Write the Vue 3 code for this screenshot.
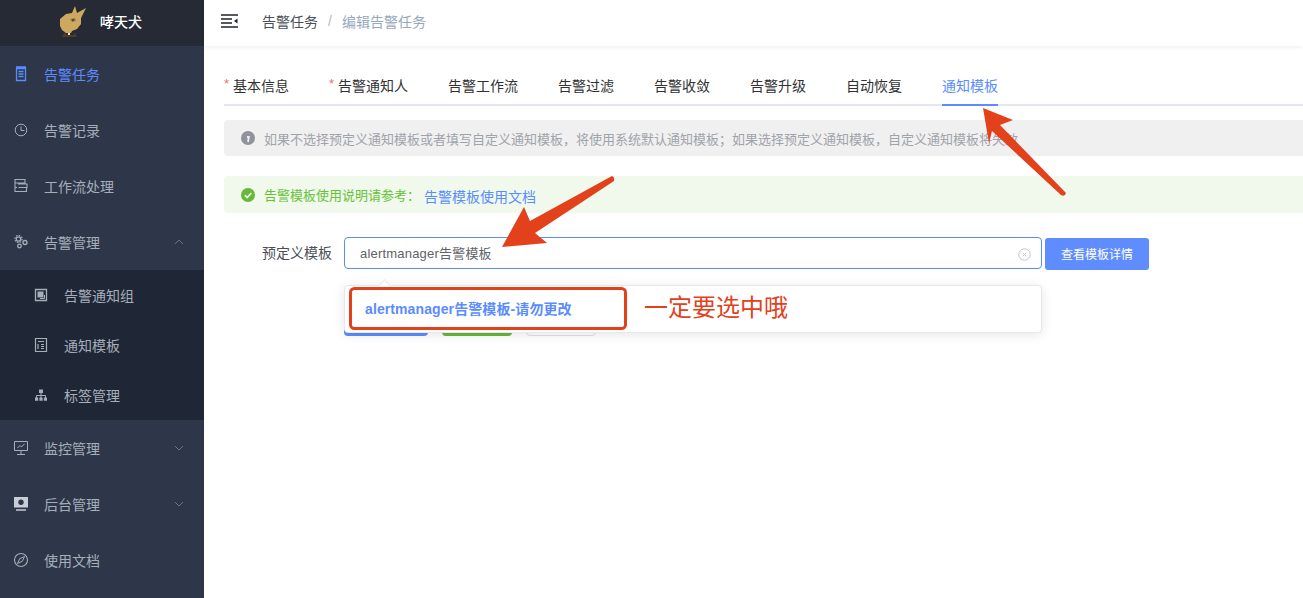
<script setup>
const tabs = [
  { label: '基本信息', req: true },
  { label: '告警通知人', req: true },
  { label: '告警工作流' },
  { label: '告警过滤' },
  { label: '告警收敛' },
  { label: '告警升级' },
  { label: '自动恢复' },
  { label: '通知模板', active: true },
]
</script>

<template>
  <div class="app">
    <aside class="side">
      <div class="logo">
        <svg class="dog" width="32" height="34" viewBox="58 4 32 34">
          <path d="M64 33L62 37H77L75 33Z" fill="#4a3d2a"/>
          <path d="M60 19L66 14L72 13L75 6L77 13L86 8L81 18L81 24L77 29L72 31L71 33L66 33L62 30L60 26Z" fill="#cda95f"/>
          <path d="M70 19L75 18L76 21L72 22Z" fill="#8f7a4c"/>
          <circle cx="73" cy="20" r="1" fill="#3f3a2c"/>
          <rect x="66" y="33" width="8" height="2" fill="#2c2a26"/>
          <rect x="68" y="33" width="2" height="2" fill="#e8e4d8"/>
        </svg>
        <span class="brand">哮天犬</span>
      </div>
      <nav class="menu">
        <a class="item active">
          <svg class="ico" viewBox="0 0 16 16"><path d="M3.500 2.500h9v12h-9zM3 1h10M5.500 5.500h5M5.500 8h5M5.500 10.500h5" fill="none" stroke="currentColor" stroke-width="1.300"/></svg>
          <span>告警任务</span>
        </a>
        <a class="item">
          <svg class="ico" viewBox="0 0 16 16"><circle cx="8" cy="8" r="5.800" fill="none" stroke="currentColor"/><path d="M8 4.500V8.500H11.500" fill="none" stroke="currentColor"/></svg>
          <span>告警记录</span>
        </a>
        <a class="item">
          <svg class="ico" viewBox="0 0 16 16"><path d="M2 1.500h10v3.500H2zM5.500 5v1h8.500v3.500H5.500M2 5v8.500h11.500V9.500M2 9.500h2" fill="none" stroke="currentColor" stroke-width="1.100"/></svg>
          <span>工作流处理</span>
        </a>
        <a class="item">
          <svg class="ico" viewBox="0 0 16 16"><g fill="none" stroke="currentColor"><circle cx="5.500" cy="5" r="2.200" stroke-width="1.300"/><circle cx="5.500" cy="5" r="3.600" stroke-width="1.200" stroke-dasharray="1.500 1.300"/><circle cx="12" cy="8.500" r="2" stroke-width="1.300"/><circle cx="6.500" cy="12" r="1.800" stroke-width="1.300"/></g></svg>
          <span>告警管理</span>
          <svg class="chev" viewBox="0 0 10 6"><path d="M1 5L5 1L9 5" fill="none" stroke="currentColor"/></svg>
        </a>
        <div class="sub">
          <a class="subitem">
            <svg class="ico" viewBox="0 0 16 16"><path d="M2.500 2.500h11v11h-11z" fill="none" stroke="currentColor" stroke-width="1.300"/><path d="M4.500 4.500h6v6h-6z" fill="currentColor"/><path d="M11.500 8v3.500H7" fill="none" stroke="currentColor"/></svg>
            <span>告警通知组</span>
          </a>
          <a class="subitem">
            <svg class="ico" viewBox="0 0 16 16"><path d="M2.500 1.500h11v13h-11zM5 4.500h6M8 7.500h3M8 9.500h3M8 11.500h3M5 7v5" fill="none" stroke="currentColor" stroke-width="1.200"/></svg>
            <span>通知模板</span>
          </a>
          <a class="subitem">
            <svg class="ico" viewBox="0 0 16 16"><path d="M6 2.500h4V6H6zM2 10.500h3.200v3.200H2zM6.400 10.500h3.200v3.200H6.400zM10.800 10.500H14v3.200h-3.200z" fill="currentColor"/><path d="M3.500 11V8.500h9V11M8 6v5" fill="none" stroke="currentColor"/></svg>
            <span>标签管理</span>
          </a>
        </div>
        <a class="item">
          <svg class="ico" viewBox="0 0 16 16"><path d="M1.500 1.500h13v9h-13zM8 10.500V14M4 14.500h8M4.500 8l2.500-2.500 1.500 1.500 3-3.200" fill="none" stroke="currentColor"/></svg>
          <span>监控管理</span>
          <svg class="chev" viewBox="0 0 10 6"><path d="M1 1L5 5L9 1" fill="none" stroke="currentColor"/></svg>
        </a>
        <a class="item">
          <svg class="ico" viewBox="0 0 16 16"><path d="M1 1h14v10.500H1z" fill="#c9ced6"/><path d="M3 14h10" stroke="#c9ced6" stroke-width="1.500"/><circle cx="8" cy="6.200" r="2.700" fill="#2e374a"/></svg>
          <span>后台管理</span>
          <svg class="chev" viewBox="0 0 10 6"><path d="M1 1L5 5L9 1" fill="none" stroke="currentColor"/></svg>
        </a>
        <a class="item">
          <svg class="ico" viewBox="0 0 16 16"><circle cx="8" cy="8" r="6.500" fill="none" stroke="currentColor" stroke-width="1.100"/><path d="M11.500 4.500L9.300 9.300L4.500 11.500L6.700 6.700Z" fill="none" stroke="currentColor"/></svg>
          <span>使用文档</span>
        </a>
      </nav>
    </aside>

    <main class="main">
      <header class="top">
        <svg class="ham" width="17" height="14" viewBox="0 0 17 14">
          <path d="M0 1h17M0 13h17M0 5h11M0 9h11" stroke="#1f2329" stroke-width="1.500"/>
          <path d="M16.500 4.500L13 7l3.500 2.500z" fill="#1f2329"/>
        </svg>
        <span class="crumb">告警任务</span>
        <span class="slash">/</span>
        <span class="crumb light">编辑告警任务</span>
      </header>

      <section class="body">
        <div class="tabs">
          <div v-for="t in tabs" :key="t.label" class="tab" :class="{ on: t.active }">
            <i v-if="t.req" class="star">*</i><span class="tl">{{ t.label }}</span>
          </div>
        </div>

        <div class="alert grey">
          <svg class="aico" width="14" height="14" viewBox="0 0 14 14"><circle cx="7" cy="7" r="7" fill="#909399"/><path d="M7.800 3h.01M6 6h1.800L7 11" fill="none" stroke="#f0f0f1" stroke-width="1.800"/></svg>
          <span>如果不选择预定义通知模板或者填写自定义通知模板，将使用系统默认通知模板；如果选择预定义通知模板，自定义通知模板将失效</span>
        </div>

        <div class="alert green">
          <svg class="aico" width="14" height="14" viewBox="0 0 14 14"><circle cx="7" cy="7" r="7" fill="#67b73b"/><path d="M3.800 7.200L6.200 9.500L10.400 5" fill="none" stroke="#f0f9eb" stroke-width="1.700"/></svg>
          <span>告警模板使用说明请参考：</span>
          <a class="link">告警模板使用文档</a>
        </div>

        <div class="row">
          <label class="lab">预定义模板</label>
          <div class="sel">
            <div class="input">
              <span>alertmanager告警模板</span>
              <svg class="clear" width="13" height="13" viewBox="0 0 13 13"><circle cx="6.500" cy="6.500" r="5.700" fill="none" stroke="#c0c4cc"/><path d="M4.800 4.800l3.400 3.400M8.200 4.800l-3.400 3.400" stroke="#c0c4cc"/></svg>
            </div>
            <div class="drop">
              <i class="pop"></i>
              <div class="opt">alertmanager告警模板-请勿更改</div>
            </div>
          </div>
          <button class="detail">查看模板详情</button>
        </div>

        <div class="btns">
          <button class="b blue"></button>
          <button class="b grn"></button>
          <button class="b wht"></button>
        </div>
      </section>

      <svg class="overlay" width="1099" height="598" viewBox="204 0 1099 598">
        <path d="M983 108L1013 120L1000 125L1066 193Q1065 197 1061 195L992 131L989 143Z" fill="#e2411c"/>
        <path d="M612 176Q615 177 614 181L535 233L547 243L502 247L524 207L530 221Z" fill="#e2411c"/>
        <rect x="350.500" y="288.500" width="275" height="40" rx="4" fill="none" stroke="#e2411c" stroke-width="3"/>
      </svg>
      <div class="note">一定要选中哦</div>
    </main>
  </div>
</template>

<style>
html, body { margin: 0; padding: 0; overflow: hidden; }
</style>

<style scoped>
.app {
  display: flex;
  width: 1303px;
  height: 598px;
  overflow: hidden;
  font-family: "Liberation Sans", "Noto Sans CJK SC", sans-serif;
  background: #fff;
}
.side { width: 204px; flex: none; background: #2e374a; color: #a6aeba; }
.logo {
  height: 46px;
  background: #252a35;
  display: flex;
  align-items: center;
  padding: 0 0 4px 58px;
  gap: 10px;
  box-sizing: border-box;
}
.dog { display: block; }
.brand { color: #fff; font-size: 14px; font-weight: 500; }
.menu { display: flex; flex-direction: column; }
.item, .subitem {
  display: flex;
  align-items: center;
  font-size: 14px;
  color: #a6aeba;
}
.item { height: 56px; padding-left: 13px; }
.item.active { color: #5b8cff; }
.ico { width: 16px; height: 16px; margin-right: 15px; flex: none; }
.chev { width: 10px; height: 6px; margin-left: auto; margin-right: 20px; color: #6b7383; }
.sub { background: #1f2636; }
.subitem { height: 50px; padding-left: 33px; }
.main { flex: 1; min-width: 0; position: relative; }
.top {
  height: 46px;
  display: flex;
  align-items: center;
  box-shadow: 0 1px 4px rgba(0, 21, 41, 0.08);
  padding: 0 0 4px 17px;
  font-size: 14px;
  box-sizing: border-box;
}
.ham { margin-right: 24px; }
.crumb { color: #4a4f57; }
.crumb.light { color: #97a8be; }
.slash { color: #b5b9c1; margin: 0 10px; }
.body { padding: 20px 0 0 20px; }
.tabs {
  display: flex;
  height: 38px;
  border-bottom: 2px solid #e4e7ed;
  font-size: 14px;
  color: #303133;
}
.tab {
  display: flex;
  align-items: center;
  height: 38px;
  padding: 0 20px;
  position: relative;
  white-space: nowrap;
}
.tab:first-child { padding-left: 0; }
.tab.on { color: #5b8cff; }
.tab.on::after {
  content: "";
  position: absolute;
  left: 20px;
  right: 20px;
  bottom: -2px;
  height: 2px;
  background: #5b8cff;
}
.star { color: #f56c6c; font-style: normal; font-size: 13px; width: 9px; margin-top: -3px; }
.alert {
  display: flex;
  align-items: center;
  border-radius: 4px 0 0 4px;
  padding-left: 17px;
  font-size: 13px;
  white-space: nowrap;
  overflow: hidden;
}
.aico { margin-right: 9px; flex: none; }
.grey { height: 36px; margin-top: 14px; background: #f0f0f1; color: #a0a3a9; }
.green { height: 37px; margin-top: 20px; background: #f0f9eb; color: #67c23a; }
.link { color: #5b8cff; font-size: 14px; margin: 2px 0 0 4px; }
.row { display: flex; align-items: flex-start; margin-top: 24px; }
.lab {
  width: 120px;
  padding-top: 8px;
  padding-right: 12px;
  box-sizing: border-box;
  text-align: right;
  font-size: 14px;
  color: #4a4f57;
  line-height: 16px;
}
.sel { width: 698px; position: relative; }
.input {
  height: 32px;
  box-sizing: border-box;
  border: 1px solid #5b8cff;
  border-radius: 4px;
  display: flex;
  align-items: center;
  justify-content: space-between;
  padding: 0 10px 1px 15px;
  font-size: 13px;
  letter-spacing: 0.2px;
  color: #606266;
}
.clear { margin-top: 4px; }
.drop {
  position: absolute;
  top: 48px;
  left: 0;
  right: 0;
  height: 48px;
  box-sizing: border-box;
  background: #fff;
  border: 1px solid #e4e7ed;
  border-radius: 4px;
  box-shadow: 0 2px 12px rgba(0, 0, 0, 0.1);
  z-index: 2;
}
.pop {
  position: absolute;
  top: -5px;
  left: 35px;
  width: 8px;
  height: 8px;
  background: #fff;
  border-left: 1px solid #e4e7ed;
  border-top: 1px solid #e4e7ed;
  transform: rotate(45deg);
}
.opt {
  padding-left: 20px;
  line-height: 46px;
  font-size: 14px;
  font-weight: 700;
  letter-spacing: 0.1px;
  color: #5b8cff;
}
.detail {
  margin: 1px 0 0 3px;
  width: 104px;
  height: 32px;
  border: 0;
  border-radius: 3px;
  padding: 0 0 2px;
  background: #5f8dff;
  color: #fff;
  font: 12px "Liberation Sans", "Noto Sans CJK SC", sans-serif;
}
.btns { display: flex; gap: 14px; margin: 35px 0 0 120px; }
.b { height: 31px; border-radius: 4px; border: 0; padding: 0; }
.blue { width: 84px; background: #5b8cff; }
.grn { width: 70px; background: #67b73b; }
.wht { width: 70px; background: #fff; border: 1px solid #dcdfe6; box-sizing: border-box; }
.overlay { position: absolute; left: 0; top: 0; pointer-events: none; z-index: 3; }
.note {
  position: absolute;
  left: 440px;
  top: 293px;
  font-size: 24px;
  line-height: 30px;
  color: #e2411c;
  z-index: 3;
  white-space: nowrap;
}
</style>
